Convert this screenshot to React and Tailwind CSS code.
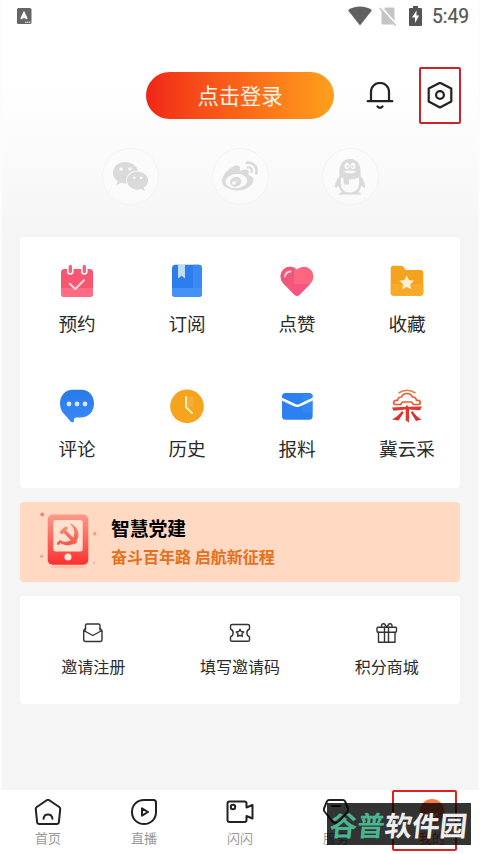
import React from "react";
import { FaWeibo, FaWeixin } from "react-icons/fa";

function StatusBar() {
  return (
    <div className="flex h-8 shrink-0 items-center justify-between pl-[17px] pr-[11px]">
      <svg className="h-4 w-[15px]" viewBox="0 0 15 16">
        <rect width="14.5" height="16" rx="1.5" fill="#666" />
        <path d="M4.200 11L7 5L9.800 11M5.500 9.300H8.500" stroke="#fff" strokeWidth="2" fill="none" />
        <path d="M8 14.200H14" stroke="#ccc" strokeWidth="1.500" strokeDasharray="1.500 .5" />
      </svg>
      <div className="flex items-center">
        <svg className="h-5 w-[24px]" viewBox="0 0 24 20">
          <path d="M0 4.200C6.500-.6 17.500-.6 24 4.200L12 19.500Z" fill="#616161" />
        </svg>
        <svg className="ml-[7px] h-5 w-[18px]" viewBox="0 0 18 20">
          <path d="M6.500 1.500H14Q15.500 1.500 15.500 3V18.500H3.500Q2.500 18.500 2.500 17.500V5.500Z" fill="#c4c4c4" />
          <path d="M1.500 1L17.500 19.500" stroke="#fff" strokeWidth="3.200" />
          <path d="M.7 2L16.700 19.500" stroke="#bcbcbc" strokeWidth="1.300" />
        </svg>
        <svg className="ml-3 h-5 w-[13px]" viewBox="0 0 13 20">
          <path d="M4 0H9V2H12Q13 2 13 3V19Q13 20 12 20H1Q0 20 0 19V3Q0 2 1 2H4Z" fill="#555" />
          <path d="M7.500 4.500L3 11.500H6V17L10.200 9.500H7.500Z" fill="#fff" />
        </svg>
        <span className="ml-[10px] w-[37px] pt-[2px] font-['Roboto',sans-serif] text-[19.3px] leading-8 font-normal text-[#555] [-webkit-text-stroke:0.25px_#555]">5:49</span>
      </div>
    </div>
  );
}

const Penguin = () => (
  <svg className="h-[38px] w-[32px]" viewBox="0 0 32 38">
    <path d="M5.500 18C4.500 9 7 1 16 1S27.500 9 26.500 18C29 21 31.500 26 31 29.500C29.500 30 28 28.500 27.200 27.500C26.800 30 26 32 24 34C26 34.500 27 35.300 27 36.500H5C5 35.300 6 34.500 8 34C6 32 5.200 30 4.800 27.500C4 28.500 2.500 30 1 29.500C.5 26 3 21 5.500 18Z" fill="#dadada" />
    <ellipse cx="13" cy="8" rx="2.500" ry="3.300" fill="#fafafa" />
    <ellipse cx="19" cy="8" rx="2.500" ry="3.300" fill="#fafafa" />
    <circle cx="13.600" cy="8.500" r="1.100" fill="#dadada" />
    <circle cx="18.600" cy="8.500" r="1.100" fill="#dadada" />
    <path d="M9 13.500Q16 11.500 23 13.500Q16 17.500 9 13.500Z" fill="#fafafa" />
    <path d="M7 19.500C12 22 20 22 25 19.500C26 28 24 34.500 16 34.500S6 28 7 21Z" fill="#fafafa" />
    <path d="M9.500 20.500L15 21.500V26.500H10Z" fill="#dadada" />
  </svg>
);

const CalendarIcon = () => (
  <svg className="h-9 w-9" viewBox="0 0 36 36">
    <rect x="2" y="6" width="32" height="28" rx="3.500" fill="#f95672" />
    <path d="M2 25H34V31Q34 34 30.500 34H5.500Q2 34 2 31Z" fill="#ff6d83" />
    <path d="M11.300 3.500V8.500M25.300 3.500V8.500" stroke="#fff" strokeWidth="6.500" strokeLinecap="round" />
    <path d="M11.300 3.500V8.500M25.300 3.500V8.500" stroke="#fb6079" strokeWidth="3.400" strokeLinecap="round" />
    <path d="M10.800 20.800L16.300 26L25 17.300" stroke="#ffd9df" strokeWidth="2" fill="none" strokeLinecap="round" strokeLinejoin="round" />
  </svg>
);
const BookIcon = () => (
  <svg className="h-9 w-9" viewBox="0 0 36 36">
    <rect x="3" y="1.700" width="30" height="32.300" rx="3.500" fill="#2c7eef" />
    <path d="M24 1.700H29.500Q33 1.700 33 5.200V25H24Z" fill="#3b89f2" />
    <path d="M3 25H33V30.500Q33 34 29.500 34H6.500Q3 34 3 30.500Z" fill="#4690f7" />
    <path d="M9 1.700H16V15.500L12.500 12.700L9 15.500Z" fill="#bfdcff" />
  </svg>
);
const HeartIcon = () => (
  <svg className="h-9 w-9" viewBox="0 0 36 36">
    <defs>
      <clipPath id="heartShape">
        <path d="M18 6.500C22 2.500 28.500 2.800 32 7C35.500 11.500 35 16.500 31.500 20.500L20.500 31.800Q18 34 15.500 31.800L4.500 20.500C1 16.500.5 11.500 4 7C7.500 2.800 14 2.500 18 6.500Z" />
      </clipPath>
    </defs>
    <g clipPath="url(#heartShape)">
      <rect width="36" height="36" fill="#fb6780" />
      <rect width="15" height="22" fill="#ef587b" />
      <rect y="21" width="36" height="15" fill="#f7557d" />
    </g>
    <path d="M6 13.500Q6.500 9 11.500 8.500" stroke="#ffd3df" strokeWidth="1.800" fill="none" strokeLinecap="round" />
  </svg>
);
const FolderIcon = () => (
  <svg className="h-9 w-9" viewBox="0 0 36 36">
    <path d="M4.500 2.700H12Q13.500 2.700 14.500 4L16.800 7H31.500Q34.300 7 34.300 10V29.500Q34.300 32.700 31 32.700H5Q1.700 32.700 1.700 29.500V5.500Q1.700 2.700 4.500 2.700Z" fill="#f5a31f" />
    <path d="M2 21H34.300V29.500Q34.300 32.700 31 32.700H5Q1.700 32.700 1.700 29.500Z" fill="#f7a928" />
    <path d="M17.700 12.300L19.900 17L25 17.700L21.300 21.200L22.200 26.300L17.700 23.900L13.200 26.300L14.100 21.200L10.400 17.700L15.500 17Z" fill="#fff0cf" />
  </svg>
);
const CommentIcon = () => (
  <svg className="h-9 w-9" viewBox="0 0 36 36">
    <defs>
      <linearGradient id="bubbleFill" x2="0" y2="1">
        <stop offset="0" stopColor="#2679e7" />
        <stop offset="1" stopColor="#3a89fb" />
      </linearGradient>
    </defs>
    <path d="M14 1.700H22C30 1.700 35 7.500 35 15.500S29.500 29.500 21.500 29.500H17Q15.500 29.500 15 31L14.700 34.500Q11.500 34.500 9.500 31L6 27C2.500 24 1 20 1 15.500C1 7.500 6 1.700 14 1.700Z" fill="url(#bubbleFill)" />
    <circle cx="10" cy="16" r="2.400" fill="#d4e7ff" />
    <circle cx="18" cy="16" r="2.400" fill="#d4e7ff" />
    <circle cx="26" cy="16" r="2.400" fill="#d4e7ff" />
  </svg>
);
const ClockIcon = () => (
  <svg className="h-9 w-9" viewBox="0 0 36 36">
    <circle cx="18" cy="18.300" r="16.800" fill="#f6a31d" />
    <rect x="17" y="9" width="7" height="10" fill="#f9b545" opacity=".6" />
    <path d="M17 9V19.300L23 25" stroke="#ffedbd" strokeWidth="2" fill="none" strokeLinecap="round" strokeLinejoin="round" />
  </svg>
);
const MailIcon = () => (
  <svg className="h-9 w-9" viewBox="0 0 36 36">
    <rect x="3" y="5" width="30.600" height="26.700" rx="3.500" fill="#2d80f0" />
    <path d="M24 6H33.500V25H24Z" fill="#3a88f4" opacity=".6" />
    <path d="M1.500 10.500L15.500 17Q18.300 18.400 21 17L35 10.500" stroke="#fff" strokeWidth="2.500" fill="none" />
  </svg>
);
const CloudPickIcon = () => (
  <svg className="h-9 w-9" viewBox="0 0 36 36" fill="none">
    <path d="M9.500 5Q18 -.5 26.500 5" stroke="#f07a3c" strokeWidth="1.600" />
    <path d="M6 16.500Q4 15.500 5 13.300Q6.500 11.800 8.500 12.500Q9 9 12.500 9Q14 5.500 18 5.500T23.500 9Q27 9 27.500 12.500Q30 11.800 31 13.300Q32 15.500 30 16.500H24.500L22.500 14H13.500L11.500 16.500Z" stroke="#e95a31" strokeWidth="1.700" strokeLinejoin="round" />
    <path d="M18 17.500V20" stroke="#e44330" strokeWidth="2" />
    <path d="M3 19.500L17 18.800H20L33 18.500L31 22.300L20 21.500V34.500L16.700 32.500V21.500L4.500 22.700Z" fill="#e03830" />
    <path d="M13 23L14.700 24.500L9.500 32.500L3 31.500Q9.500 28 13 23ZM23.500 23L21.800 24.500L27 33L32.500 31.500Q26.500 28 23.500 23Z" fill="#dc302e" />
  </svg>
);

const services = [
  { label: "预约", Icon: CalendarIcon },
  { label: "订阅", Icon: BookIcon },
  { label: "点赞", Icon: HeartIcon },
  { label: "收藏", Icon: FolderIcon },
  { label: "评论", Icon: CommentIcon },
  { label: "历史", Icon: ClockIcon },
  { label: "报料", Icon: MailIcon },
  { label: "冀云采", Icon: CloudPickIcon },
];

const PartyPhone = () => (
  <svg className="h-16 w-16 shrink-0" viewBox="0 0 64 64">
    <defs>
      <linearGradient id="phoneFill" x2="0" y2="1">
        <stop offset="0" stopColor="#fb9b8b" />
        <stop offset="1" stopColor="#fb3030" />
      </linearGradient>
      <linearGradient id="emblemFill" x2="0" y2="1">
        <stop offset="0" stopColor="#f78f7c" />
        <stop offset="1" stopColor="#f4544b" />
      </linearGradient>
    </defs>
    <ellipse cx="31" cy="57" rx="18" ry="1.500" fill="#fbc0a8" />
    <rect x="10.700" y="4.500" width="40.600" height="50.200" rx="5" fill="url(#phoneFill)" />
    <rect x="16.300" y="10" width="29.400" height="31.500" rx="2.500" fill="#ffe1cf" />
    <circle cx="31" cy="47" r="3.500" fill="#ffe9df" />
    <path d="M32.500 13.500C38 14.500 42 19.500 41.300 26C40.800 29.500 39.500 31.500 37.700 33L35.500 34.200C30.500 36 26 35 23.500 33L22 34.800A1.500 1.500 0 1 1 20.800 32L22.800 30C28 33.300 33.500 32 36 28C38.500 23 37.500 17.500 32.500 13.500Z" fill="url(#emblemFill)" />
    <path d="M22.500 22L28 16.500L31.500 17.800L29 20.300L40.200 31.700L37.700 34.200L26.500 22.800L24.800 24.500Z" fill="url(#emblemFill)" />
    <circle cx="5.300" cy="4.500" r="2" fill="#f58473" />
    <circle cx="57.700" cy="23.700" r="1.900" fill="#fba08a" />
    <circle cx="4.700" cy="46.300" r="1.500" fill="#f99a87" />
    <circle cx="57" cy="53" r="1.200" fill="#fcb8a0" />
  </svg>
);

const stroke = { fill: "none", stroke: "#333", strokeWidth: 1.4, strokeLinejoin: "round", strokeLinecap: "round" };
const InviteIcon = () => (
  <svg className="h-[22px] w-[22px]" viewBox="0 0 22 22" {...stroke}>
    <path d="M3.500 8V3.500Q3.500 2 5 2H16.500Q18 2 18 3.500V8" />
    <path d="M3.500 6.500L1.700 8.500V17.500Q1.700 19.500 3.700 19.500H18Q20 19.500 20 17.500V8.500L18 6.500M1.700 8.500L10.800 13.500L20 8.500" />
  </svg>
);
const TicketIcon = () => (
  <svg className="h-[22px] w-[22px]" viewBox="0 0 22 22" {...stroke}>
    <path d="M3 2.500H19Q20.500 2.500 20.500 4V7C17 8.500 17 13.500 20.500 15V18Q20.500 19.300 19 19.300H3Q1.500 19.300 1.500 18V15C5 13.500 5 8.500 1.500 7V4Q1.500 2.500 3 2.500Z" />
    <path d="M11 7.300L12.200 9.500L14.700 10L13 11.900L13.300 14.300L11 13.300L8.700 14.300L9 11.900L7.300 10L9.800 9.500Z" />
  </svg>
);
const GiftIcon = () => (
  <svg className="h-[22px] w-[22px]" viewBox="0 0 22 22" {...stroke}>
    <rect x="1" y="5.200" width="19.500" height="5" rx="1" />
    <path d="M2.500 10.200V20.300H19V10.200M8.500 5.200V20.300M12.500 5.200V20.300M10.700 5.200L8.500 2Q6 1 5.500 3.500V5.200M10.700 5.200L13 2Q15.500 1 16 3.500V5.200" />
  </svg>
);

const HomeIcon = () => (
  <>
    <path d="M12.700 1.200Q14 .5 15.300 1.200L25.200 8Q26.400 9 26.200 10.300L24.900 23Q24.700 25 22.700 25H5.300Q3.300 25 3.100 23L1.800 10.300Q1.600 9 2.800 8Z" />
    <path d="M9.500 19.800Q10 15.500 14 15.500T18.500 19.800" />
  </>
);
const LiveIcon = () => (
  <>
    <path d="M14 1H23.500Q26 1 26 3.500V13C26 20 21 25 14 25S2 20 2 13S7 1 14 1Z" />
    <path d="M12 9.300V16.700L18 13Z" />
  </>
);
const VideoIcon = () => (
  <>
    <path d="M3.500 2.500H18.500Q20.500 2.500 20.500 4.500V8.500L26.500 6V19.500L20.500 17V21Q20.500 23 18.500 23H3.500Q1.500 23 1.500 21V4.500Q1.500 2.500 3.500 2.500Z" />
    <circle cx="7" cy="8" r="2.200" />
  </>
);
const ServiceIcon = () => (
  <>
    <path d="M7 1H21Q22.200 1 23 2.200L26 9.500Q26.500 11 25.500 12.500L18 22Q14 26 10 22L2.500 12.500Q1.500 11 2 9.500L5 2.200Q5.800 1 7 1Z" />
    <path d="M10 7H18" />
  </>
);
const MineIcon = () => (
  <g stroke="none">
    <circle cx="14" cy="12.500" r="12.500" fill="#fb7a45" />
    <path d="M9 15Q14 20 19 15" stroke="#fff" strokeWidth="2" />
  </g>
);

const tabs = [
  { label: "首页", Icon: HomeIcon },
  { label: "直播", Icon: LiveIcon },
  { label: "闪闪", Icon: VideoIcon },
  { label: "服务", Icon: ServiceIcon },
  { label: "我的", Icon: MineIcon, active: true },
];

export default function App() {
  return (
    <div className="relative flex h-[854px] w-[480px] flex-col overflow-hidden bg-[#f5f5f5] font-['Noto_Sans_CJK_SC',sans-serif] text-[#2b2b2b]">
      <header className="flex h-[237px] shrink-0 flex-col border-x-2 border-[#fcfcfc] bg-linear-to-b from-white from-35% to-[#f5f5f5]">
        <div className="-mx-[2px]"><StatusBar /></div>
        <div className="-mx-[2px] mt-10 flex h-[47px] items-center pl-[146px]">
          <button className="h-[47px] w-[188px] rounded-full bg-linear-to-r from-[#f12318] via-[#fb6418] to-[#ff9f1c] text-[21.3px] leading-[47px] text-[#fff4ea]"><span className="relative -top-px">点击登录</span></button>
          <svg className="ml-8 h-7 w-7" viewBox="0 0 28 28" fill="none" stroke="#222" strokeWidth="2.200" strokeLinecap="round">
            <path d="M5 19V10C5 4.500 9 1 14 1S23 4.500 23 10V19M1.700 19.200H26.300M11.500 24.500Q14 27 16.500 24.500" />
          </svg>
          <div className="ml-[25px] flex h-[57px] w-[42px] items-center justify-center rounded-[2px] border-2 border-[#cf2227]">
            <svg className="h-7 w-7 shrink-0" viewBox="0 0 28 28" fill="none" stroke="#222" strokeWidth="2.200" strokeLinejoin="round">
              <path d="M14 .7L25.300 6.500V19.500L14 25.500L2.700 19.500V6.500Z" />
              <circle cx="14" cy="13" r="3.900" />
            </svg>
          </div>
        </div>
        <div className="mt-[29px] flex justify-center gap-[53px] text-[#dadada]">
          <div className="flex h-[57px] w-[57px] items-center justify-center rounded-full border border-[#f3f3f3] bg-white/30"><FaWeixin size={37} /></div>
          <div className="flex h-[57px] w-[57px] items-center justify-center rounded-full border border-[#f3f3f3] bg-white/30"><FaWeibo size={36} /></div>
          <div className="flex h-[57px] w-[57px] items-center justify-center rounded-full border border-[#f3f3f3] bg-white/30"><Penguin /></div>
        </div>
      </header>

      <main className="flex grow flex-col border-x-2 border-[#fcfcfc] px-[18px]">
        <section className="h-[251px] rounded-[4px] bg-white pt-[26px]">
          <div className="ml-[2px] grid w-[440px] grid-cols-4 gap-y-[49px]">
            {services.map(({ label, Icon }) => (
              <div key={label} className="flex h-[76px] flex-col items-center">
                <Icon />
                <span className="mt-[10px] text-[18.6px] leading-7">{label}</span>
              </div>
            ))}
          </div>
        </section>

        <section className="mt-[14px] flex h-20 items-start rounded-[4px] bg-[#ffd9c2] pt-2 pl-[17px]">
          <PartyPhone />
          <div className="ml-[10px] flex flex-col pt-1">
            <h2 className="text-[18.8px] leading-7 font-bold text-black">智慧党建</h2>
            <p className="mt-[2px] text-[16px] leading-6 font-bold text-[#e4701e]">奋斗百年路 启航新征程</p>
          </div>
        </section>

        <section className="mt-[14px] grid h-[108px] grid-cols-3 rounded-[4px] bg-white pt-[26px]">
          <div className="flex flex-col items-center"><InviteIcon /><span className="mt-[10px] text-[16px] leading-6">邀请注册</span></div>
          <div className="flex flex-col items-center"><TicketIcon /><span className="mt-[10px] text-[16px] leading-6">填写邀请码</span></div>
          <div className="flex flex-col items-center"><GiftIcon /><span className="mt-[10px] text-[16px] leading-6">积分商城</span></div>
        </section>
      </main>

      <nav className="grid h-16 shrink-0 grid-cols-5 bg-white pt-[9px]">
        {tabs.map(({ label, Icon, active }) => (
          <div key={label} className="flex flex-col items-center">
            <svg className="h-[27px] w-7" viewBox="0 0 28 27" fill="none" stroke="#222" strokeWidth="2" strokeLinejoin="round" strokeLinecap="round">
              <Icon />
            </svg>
            <span className={active ? "mt-[3px] text-[13px] leading-[18px] text-[#fb5a2c]" : "mt-[3px] text-[13px] leading-[18px] text-[#999]"}>{label}</span>
          </div>
        ))}
      </nav>

      <div className="absolute top-[790px] left-[392px] h-[61px] w-[65px] rounded-[2px] border-2 border-[#e0201f]" />
      <div className="absolute top-[803px] left-[327px] flex h-[42px] w-[144px] items-center justify-center bg-black/80 text-[27.500px] leading-[42px] font-bold whitespace-nowrap text-[#eee]">
        <span className="-skew-x-6"><span className="text-[#4bb592]">谷普</span>软件园</span>
      </div>
    </div>
  );
}
